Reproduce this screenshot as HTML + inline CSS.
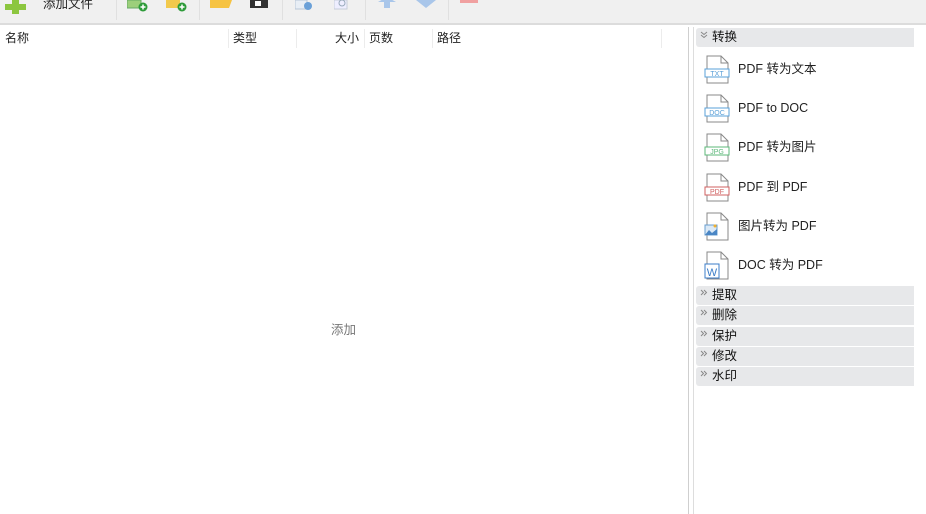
<!DOCTYPE html>
<html><head><meta charset="utf-8"><style>
*{margin:0;padding:0;box-sizing:border-box}
body{width:926px;height:514px;overflow:hidden;background:#fff;font-family:"Liberation Sans","Noto Sans CJK SC",sans-serif;font-size:12px;color:#222;position:relative}
.tb{position:absolute;left:0;top:0;width:926px;height:25px;background:#f0f0f0;border-bottom:2px solid #dcdcdc}
.ab{position:absolute}
.sep{position:absolute;top:0;width:1px;height:20px;background:#e0e0e0}
.left{position:absolute;left:0;top:27px;width:689px;height:487px;border-right:1px solid #cfcfcf}
.hdr{position:absolute;top:29px;font-size:12px;line-height:18px;color:#222}
.csep{position:absolute;top:29px;width:1px;height:19px;background:#ececec}
.rp{position:absolute;left:693px;top:27px;width:221px;height:487px;border-left:1px solid #ddd}
.sec{position:absolute;left:696px;width:218px;height:19px;background:#e7e8ea;border-radius:3px 0 0 3px;font-size:12.5px;line-height:19px;padding-left:16px;color:#111}
.sec svg{position:absolute;left:4px;top:3px}
.it{position:absolute;left:704px;height:30px}
.it svg{position:absolute;left:0;top:0}
.it span{position:absolute;left:34px;top:6px;font-size:12.5px;line-height:16px;white-space:nowrap;color:#222}
</style></head><body>
<div class="tb">
 <svg class="ab" style="left:5px;top:0" width="22" height="14"><path d="M7 0h7v4h7v6h-7v4h-7v-4h-7v-6h7z" fill="#8cc63f"/></svg>
 <div class="ab" style="left:43px;top:-5px;font-size:12.5px;line-height:18px">添加文件</div>
 <div class="sep" style="left:116px"></div>
 <svg class="ab" style="left:127px;top:0" width="22" height="12"><rect x="0" y="0" width="14" height="8" fill="#9ccf7b" stroke="#6a6" /><circle cx="16" cy="7" r="4.5" fill="#2e9b3a"/><path d="M16 4.5v5M13.5 7h5" stroke="#fff" stroke-width="1.5"/></svg>
 <svg class="ab" style="left:166px;top:0" width="22" height="12"><rect x="0" y="0" width="14" height="8" fill="#f2c94c"/><circle cx="16" cy="7" r="4.5" fill="#2e9b3a"/><path d="M16 4.5v5M13.5 7h5" stroke="#fff" stroke-width="1.5"/></svg>
 <div class="sep" style="left:199px"></div>
 <svg class="ab" style="left:210px;top:0" width="22" height="10"><path d="M0 0h22l-3 8h-19z" fill="#f6c342"/></svg>
 <svg class="ab" style="left:250px;top:0" width="20" height="10"><rect x="0" y="0" width="18" height="8" fill="#333"/><rect x="5" y="1" width="6" height="5" fill="#fff"/></svg>
 <div class="sep" style="left:282px"></div>
 <svg class="ab" style="left:295px;top:0" width="20" height="12"><rect x="0" y="0" width="12" height="9" fill="#e8eef5" stroke="#b8c6d6"/><circle cx="13" cy="6" r="4" fill="#6aa0d8"/></svg>
 <svg class="ab" style="left:334px;top:0" width="20" height="12"><rect x="0" y="0" width="13" height="9" fill="#eef" stroke="#c6cdd8"/><circle cx="8" cy="3" r="3" fill="none" stroke="#9ab"/></svg>
 <div class="sep" style="left:365px"></div>
 <svg class="ab" style="left:378px;top:0" width="18" height="10"><rect x="6" y="0" width="6" height="8" fill="#a9c6ea"/><path d="M0 2h18l-9-5z" fill="#a9c6ea"/></svg>
 <svg class="ab" style="left:416px;top:0" width="20" height="10"><path d="M0 0h20l-10 8z" fill="#a9c6ea"/></svg>
 <div class="sep" style="left:448px"></div>
 <div class="ab" style="left:460px;top:0;width:18px;height:3px;background:#f0a0a0"></div>
</div>
<div class="left"></div>
<div class="hdr" style="left:5px">名称</div>
<div class="hdr" style="left:233px">类型</div>
<div class="hdr" style="left:335px">大小</div>
<div class="hdr" style="left:369px">页数</div>
<div class="hdr" style="left:437px">路径</div>
<div class="csep" style="left:228px"></div><div class="csep" style="left:296px"></div><div class="csep" style="left:364px"></div><div class="csep" style="left:432px"></div><div class="csep" style="left:661px"></div>
<div class="ab" style="left:331px;top:322px;color:#777;font-size:12.5px;line-height:16px">添加</div>
<div class="rp"></div>
<div class="sec" style="top:28px"><svg width="8" height="8"><path d="M1 1l3 2.5 3-2.5M1 4l3 2.5 3-2.5" fill="none" stroke="#888"/></svg>转换</div>
<div class="it" style="top:55px"><svg width="30" height="30"><path d="M3 1h14l7 7v20h-21z" fill="#fff" stroke="#888"/><path d="M17 1v7h7" fill="none" stroke="#888"/><rect x="1" y="14" width="24" height="8" fill="#fff" stroke="#5aa0d8"/><text x="13" y="21" font-size="7" fill="#5aa0d8" text-anchor="middle" font-family="Liberation Sans">TXT</text></svg><span>PDF 转为文本</span></div>
<div class="it" style="top:94px"><svg width="30" height="30"><path d="M3 1h14l7 7v20h-21z" fill="#fff" stroke="#888"/><path d="M17 1v7h7" fill="none" stroke="#888"/><rect x="1" y="14" width="24" height="8" fill="#fff" stroke="#5aa0d8"/><text x="13" y="21" font-size="7" fill="#5aa0d8" text-anchor="middle" font-family="Liberation Sans">DOC</text></svg><span>PDF to DOC</span></div>
<div class="it" style="top:133px"><svg width="30" height="30"><path d="M3 1h14l7 7v20h-21z" fill="#fff" stroke="#888"/><path d="M17 1v7h7" fill="none" stroke="#888"/><rect x="1" y="14" width="24" height="8" fill="#fff" stroke="#5cb87a"/><text x="13" y="21" font-size="7" fill="#5cb87a" text-anchor="middle" font-family="Liberation Sans">JPG</text></svg><span>PDF 转为图片</span></div>
<div class="it" style="top:173px"><svg width="30" height="30"><path d="M3 1h14l7 7v20h-21z" fill="#fff" stroke="#888"/><path d="M17 1v7h7" fill="none" stroke="#888"/><rect x="1" y="14" width="24" height="8" fill="#fff" stroke="#d06060"/><text x="13" y="21" font-size="7" fill="#d06060" text-anchor="middle" font-family="Liberation Sans">PDF</text></svg><span>PDF 到 PDF</span></div>
<div class="it" style="top:212px"><svg width="30" height="30"><path d="M3 1h14l7 7v20h-21z" fill="#fff" stroke="#888"/><path d="M17 1v7h7" fill="none" stroke="#888"/><rect x="1" y="13" width="12" height="10" fill="#dbe9f6" stroke="#6a9fd0"/><path d="M1 23l4-5 3 3 5-4v6z" fill="#4a86c5"/><circle cx="11" cy="14" r="1.5" fill="#f0b030"/></svg><span>图片转为 PDF</span></div>
<div class="it" style="top:251px"><svg width="30" height="30"><path d="M3 1h14l7 7v20h-21z" fill="#fff" stroke="#888"/><path d="M17 1v7h7" fill="none" stroke="#888"/><rect x="1" y="13" width="14" height="14" fill="#fff" stroke="#3b7dc8"/><text x="8" y="25" font-size="11" fill="#3b7dc8" text-anchor="middle" font-family="Liberation Sans">W</text></svg><span>DOC 转为 PDF</span></div>
<div class="sec" style="top:286px"><svg width="8" height="8"><path d="M1 1l2.5 2.5-2.5 2.5M4 1l2.5 2.5-2.5 2.5" fill="none" stroke="#888"/></svg>提取</div>
<div class="sec" style="top:306px"><svg width="8" height="8"><path d="M1 1l2.5 2.5-2.5 2.5M4 1l2.5 2.5-2.5 2.5" fill="none" stroke="#888"/></svg>删除</div>
<div class="sec" style="top:327px"><svg width="8" height="8"><path d="M1 1l2.5 2.5-2.5 2.5M4 1l2.5 2.5-2.5 2.5" fill="none" stroke="#888"/></svg>保护</div>
<div class="sec" style="top:347px"><svg width="8" height="8"><path d="M1 1l2.5 2.5-2.5 2.5M4 1l2.5 2.5-2.5 2.5" fill="none" stroke="#888"/></svg>修改</div>
<div class="sec" style="top:367px"><svg width="8" height="8"><path d="M1 1l2.5 2.5-2.5 2.5M4 1l2.5 2.5-2.5 2.5" fill="none" stroke="#888"/></svg>水印</div>
</body></html>
